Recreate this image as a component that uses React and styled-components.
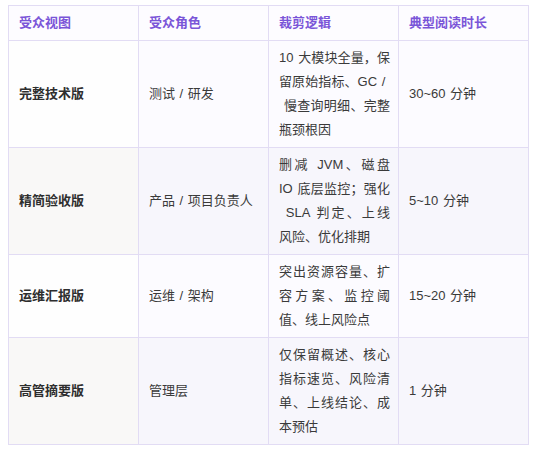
import React from 'react'
import styled, { createGlobalStyle } from 'styled-components'

const GlobalStyle = createGlobalStyle`
  html, body {
    margin: 0;
    padding: 0;
    background: #ffffff;
  }
  body {
    font-family: "Liberation Sans", "Noto Sans CJK SC", sans-serif;
  }
`

const Page = styled.div`
  padding: 5px 7px 0 8px;
`

const Table = styled.table`
  width: 521px;
  table-layout: fixed;
  border-collapse: collapse;
  font-size: 13px;
  line-height: 24px;
  color: #3a3a3a;
  word-spacing: 1px;
`

const HeadCell = styled.th`
  border: 1px solid #e2dcf4;
  padding: 5px 8px 5px 10px;
  text-align: left;
  font-weight: 600;
  color: #7a55d8;
  background: #fdfcff;
`

const Row = styled.tr`
  background: ${p => (p.$alt ? '#f7f6fc' : '#fcfbff')};
`

const Cell = styled.td`
  border: 1px solid #e2dcf4;
  padding: 5px 8px 5px 10px;
  vertical-align: middle;
  text-align: ${p => (p.$justify ? 'justify' : 'left')};
`

const NameCell = styled(Cell)`
  font-weight: 600;
  color: #2e2e2e;
  background: ${p => (p.$alt ? '#f9f8f7' : '#fefefe')};
`

const rows = [
  {
    name: '完整技术版',
    role: '测试 / 研发',
    logic: '10 大模块全量，保留原始指标、GC / \u200b\u00a0慢查询明细、完整瓶颈根因',
    time: '30~60 分钟'
  },
  {
    name: '精简验收版',
    role: '产品 / 项目负责人',
    logic: '删减 JVM、磁盘 IO 底层监控；强化\u200b\u00a0SLA 判定、上线风险、优化排期',
    time: '5~10 分钟'
  },
  {
    name: '运维汇报版',
    role: '运维 / 架构',
    logic: '突出资源容量、扩容方案、监控阈值、线上风险点',
    time: '15~20 分钟'
  },
  {
    name: '高管摘要版',
    role: '管理层',
    logic: '仅保留概述、核心指标速览、风险清单、上线结论、成本预估',
    time: '1 分钟'
  }
]

export default function App() {
  return (
    <Page>
      <GlobalStyle />
      <Table>
        <thead>
          <tr>
            <HeadCell>受众视图</HeadCell>
            <HeadCell>受众角色</HeadCell>
            <HeadCell>裁剪逻辑</HeadCell>
            <HeadCell>典型阅读时长</HeadCell>
          </tr>
        </thead>
        <tbody>
          {rows.map((r, i) => (
            <Row key={r.name} $alt={i % 2 === 1}>
              <NameCell $alt={i % 2 === 1}>{r.name}</NameCell>
              <Cell>{r.role}</Cell>
              <Cell $justify>{r.logic}</Cell>
              <Cell>{r.time}</Cell>
            </Row>
          ))}
        </tbody>
      </Table>
    </Page>
  )
}
